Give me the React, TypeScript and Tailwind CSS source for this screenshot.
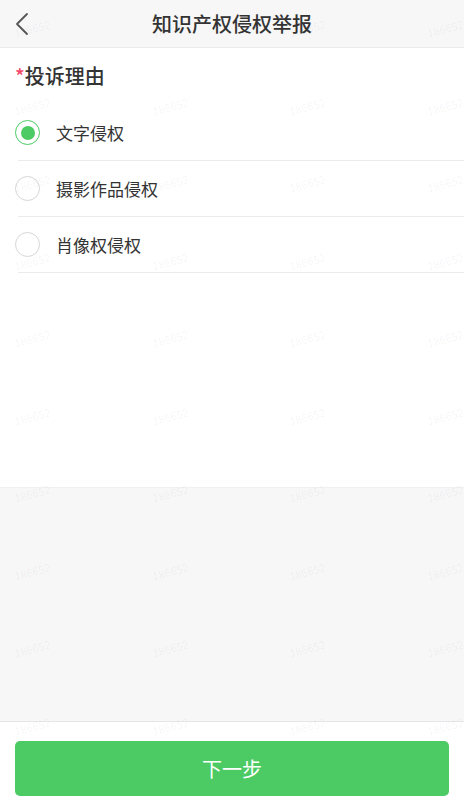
import { useState } from "react";

// 知识产权侵权举报 - 投诉理由选择

const reasons = ["文字侵权", "摄影作品侵权", "肖像权侵权"];

const wmRows = [29, 107, 184, 262, 339, 417, 494, 572, 649, 727];
const wmCols = [14, 152, 289, 427];

const Watermark = () => (
  <div className="pointer-events-none absolute inset-0 overflow-hidden">
    {wmRows.map((y) =>
      wmCols.map((x) => (
        <span
          key={`${x}-${y}`}
          className="absolute -rotate-[15deg] text-[11px] leading-none text-[#000]/[0.05]"
          style={{ left: x, top: y - 6 }}
        >
          186652
        </span>
      ))
    )}
  </div>
);

const Radio = ({ checked }: { checked: boolean }) => (
  <div
    className={`flex h-[25px] w-[25px] shrink-0 items-center justify-center rounded-full border-[1.5px] ${
      checked ? "border-[#4ccb64]" : "border-[#d6d6d6]"
    }`}
  >
    {checked && <div className="h-[14px] w-[14px] rounded-full bg-[#4ccb64]" />}
  </div>
);

export default function App() {
  const [selected, setSelected] = useState(0);

  return (
    <div
      className="relative flex h-[798px] w-[464px] flex-col bg-[#f7f7f7] text-[#333]"
      style={{ fontFamily: '"Noto Sans CJK SC", "Noto Sans", sans-serif' }}
    >
      {/* ヘッダー */}
      <div className="relative flex h-[48px] shrink-0 items-center justify-center border-b border-[#ebebeb] bg-[#f7f7f7]">
        <button className="absolute left-[12px] top-[10px] p-[2px]">
          <svg width="16" height="24" viewBox="0 0 16 24" fill="none">
            <path d="M13 2 L3 12 L13 22" stroke="#555" strokeWidth="1.8" strokeLinecap="round" strokeLinejoin="round" />
          </svg>
        </button>
        <h1 className="text-[20px] font-medium leading-none">知识产权侵权举报</h1>
      </div>

      {/* 投诉理由 */}
      <div className="h-[439px] shrink-0 bg-white">
        <div className="flex items-center pl-[15px] pt-[16px] text-[20px] font-medium leading-[24px]">
          <span className="text-[#f5486b]">*</span>
          <span>投诉理由</span>
        </div>
        <div className="mt-[17px]">
          {reasons.map((r, i) => (
            <div key={r}>
              <div
                onClick={() => setSelected(i)}
                className="flex h-[55px] cursor-pointer items-center"
              >
                <div className="pl-[15px] pr-[16px]">
                  <Radio checked={selected === i} />
                </div>
                <div className="text-[17px]">{r}</div>
              </div>
              <div className="ml-[18px] h-px bg-[#ebebeb]" />
            </div>
          ))}
        </div>
      </div>

      <div className="flex-1 border-t border-[#f0f0f0]" />

      {/* フッター */}
      <div className="shrink-0 border-t border-[#e6e6e6] bg-white px-[15px] pb-[2px] pt-[19px]">
        <button className="flex h-[55px] w-full items-center justify-center rounded-[5px] bg-[#4ccb64] text-[20px] text-white">
          下一步
        </button>
      </div>

      <Watermark />
    </div>
  );
}
